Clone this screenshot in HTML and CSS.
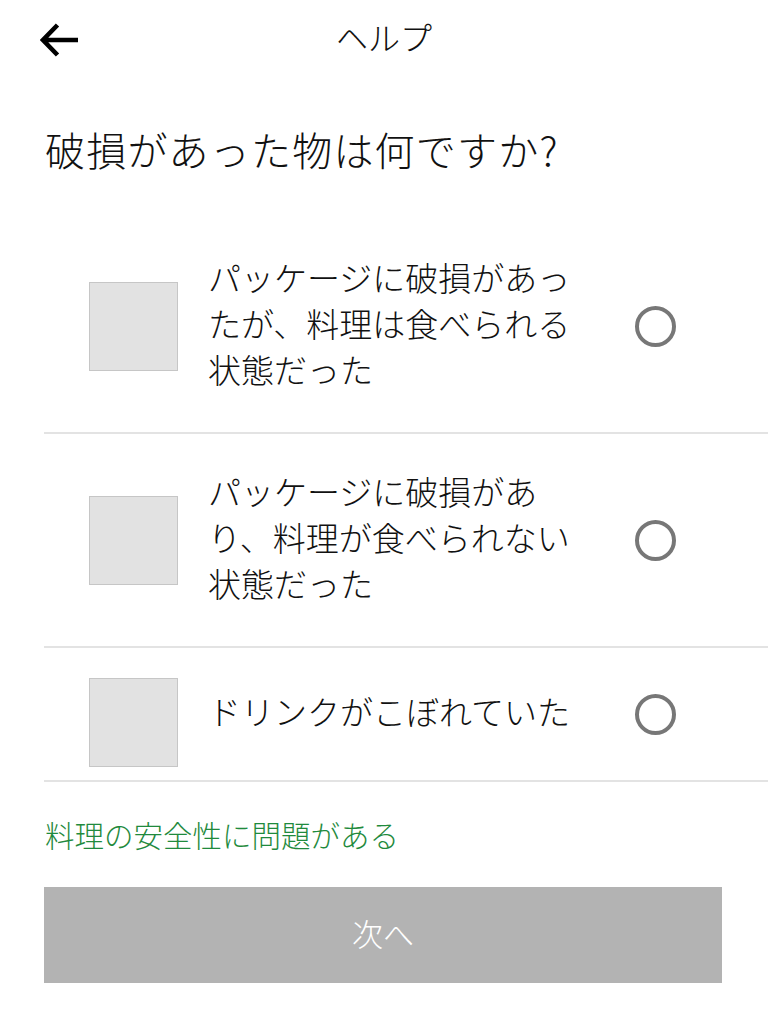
FILE: index.html
```html
<!DOCTYPE html>
<html lang="ja">
<head>
<meta charset="utf-8">
<title>ヘルプ</title>
<link rel="stylesheet" href="styles.css">
</head>
<body>
<header class="topbar">
  <button class="back" aria-label="戻る">
    <svg width="38" height="34" viewBox="0 0 38 34"><path d="M17.5 2 L3 17 L17.5 32 M3.5 17 H38" fill="none" stroke="#000" stroke-width="4.6" stroke-linejoin="miter"/></svg>
  </button>
  <h1 class="title">ヘルプ</h1>
  <span class="spacer"></span>
</header>
<main>
  <h2 class="question">破損があった物は何ですか?</h2>
  <ul class="options">
    <li class="option">
      <div class="thumb"></div>
      <div class="label">パッケージに破損があったが、料理は食べられる状態だった</div>
      <span class="radio"></span>
    </li>
    <li class="option">
      <div class="thumb"></div>
      <div class="label">パッケージに破損があり、料理が食べられない状態だった</div>
      <span class="radio"></span>
    </li>
    <li class="option option--short">
      <div class="thumb"></div>
      <div class="label">ドリンクがこぼれていた</div>
      <span class="radio"></span>
    </li>
  </ul>
  <a class="link" href="#">料理の安全性に問題がある</a>
  <button class="next">次へ</button>
</main>
</body>
</html>
```
FILE: styles.css
```css
* { box-sizing: border-box; }
html, body { margin: 0; padding: 0; background: #fff; }
body {
  font-family: "Noto Sans CJK JP", "Noto Sans", sans-serif;
  font-weight: 300;
  color: #111;
  width: 768px;
}
.topbar {
  display: grid;
  grid-template-columns: 120px 1fr 120px;
  align-items: center;
  height: 78px;
  padding-left: 40px;
}
.back {
  border: 0;
  background: none;
  padding: 0;
  margin: 0;
  width: 38px;
  height: 34px;
  display: block;
  align-self: start;
  margin-top: 23px;
}
.back svg { display: block; }
.title {
  margin: 0 0 6px;
  text-align: center;
  font-size: 32px;
  font-weight: 300;
  line-height: 40px;
  padding-right: 40px;
}
.question {
  margin: 43px 0 43px 45px;
  font-size: 40px;
  letter-spacing: 1.2px;
  font-weight: 300;
  line-height: 56px;
  color: #111;
}
.options {
  list-style: none;
  margin: 0 0 0 44px;
  padding: 0;
}
.option {
  display: flex;
  align-items: center;
  padding: 34px 92px 34px 45px;
  border-bottom: 2px solid #e3e3e3;
}
.thumb {
  flex: none;
  width: 89px;
  height: 89px;
  background: #e2e2e2;
  border: 1px solid #c6c6c6;
}
.label {
  width: 372px;
  margin-left: 30px;
  padding-bottom: 6px;
  font-size: 33px;
  line-height: 46px;
  color: #111;
}
.radio {
  flex: none;
  margin-left: auto;
  width: 41px;
  height: 41px;
  border-radius: 50%;
  border: 4.5px solid #777;
}
.option--short {
  padding-top: 13px;
  padding-bottom: 13px;
}
.option--short .thumb {
  margin-top: 17px;
}
.link {
  display: block;
  margin: 32px 0 0 45px;
  font-size: 29.5px;
  line-height: 40px;
  color: #1f8a3d;
  text-decoration: none;
}
.next {
  display: block;
  margin: 33px 0 0 44px;
  width: 678px;
  height: 96px;
  border: 0;
  background: #b3b3b3;
  color: #fff;
  font-family: inherit;
  font-weight: 300;
  font-size: 31px;
  padding: 0 0 6px;
}
```
